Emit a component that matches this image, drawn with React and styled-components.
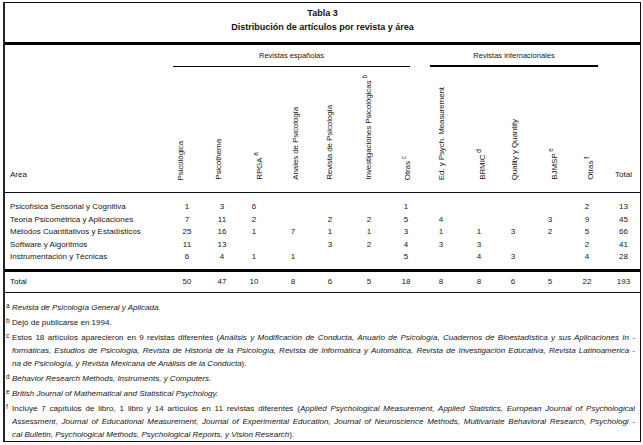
import React from 'react';
import styled, { createGlobalStyle } from 'styled-components';

const GlobalStyle = createGlobalStyle`
  html, body { margin: 0; padding: 0; background: #fff; }
  body {
    font-family: "Liberation Sans", Arial, sans-serif;
    color: #161616;
  }
`;

const COLS = '164px 36px 34px 30px 48px 26px 52px 22px 48px 28px 40px 34px 40px 33px';

const heads = [
  { label: 'Psicológica', dx: -7 },
  { label: 'Psicothema', dx: -4 },
  { label: 'RPGA', sup: 'a', dx: 3 },
  { label: 'Anales de Psicología', dx: 2 },
  { label: 'Revista de Psicología', dx: -1 },
  { label: 'Investigaciones Psicológicas', sup: 'b', dx: -3 },
  { label: 'Otras', sup: 'c', dx: -1 },
  { label: 'Ed. y Psych. Measurement', dx: 0 },
  { label: 'BRMIC', sup: 'd', dx: 1 },
  { label: 'Quality y Quantity', dx: 1 },
  { label: 'BJMSP', sup: 'e', dx: 2 },
  { label: 'Otras', sup: 'f', dx: 1 },
];

const rows = [
  ['Psicofísica Sensorial y Cognitiva', 1, 3, 6, '', '', '', 1, '', '', '', '', 2, 13],
  ['Teoría Psicométrica y Aplicaciones', 7, 11, 2, '', 2, 2, 5, 4, '', '', 3, 9, 45],
  ['Métodos Cuantitativos y Estadísticos', 25, 16, 1, 7, 1, 1, 3, 1, 1, 3, 2, 5, 66],
  ['Software y Algoritmos', 11, 13, '', '', 3, 2, 4, 3, 3, '', '', 2, 41],
  ['Instrumentación y Técnicas', 6, 4, 1, 1, '', '', 5, '', 4, 3, '', 4, 28],
];

const totals = ['Total', 50, 47, 10, 8, 6, 5, 18, 8, 8, 6, 5, 22, 193];

function App() {
  return (
    <>
      <GlobalStyle />
      <Frame>
        <TitleBlock>
          <Title>Tabla 3</Title>
          <Title>Distribución de artículos por revista y área</Title>
        </TitleBlock>

        <HeadGrid>
          <GroupTitle $from={2} $to={9} $mx="0 7px 0 4px" $rule={1}>Revistas españolas</GroupTitle>
          <GroupTitle $from={9} $to={14} $mx="0 9px 0 13px" $rule={2}>Revistas internacionales</GroupTitle>
          <AreaLabel>Area</AreaLabel>
          {heads.map((h, i) => (
            <RotHead key={i} $col={i + 2} $dx={h.dx}>
              {h.label}
              {h.sup && <RotSup>{h.sup}</RotSup>}
            </RotHead>
          ))}
          <TotalLabel>Total</TotalLabel>
        </HeadGrid>

        <Body>
          {rows.map((r, i) => (
            <Row key={i}>
              {r.map((c, j) => (j === 0 ? <AreaCell key={j}>{c}</AreaCell> : <Num key={j}>{c}</Num>))}
            </Row>
          ))}
        </Body>

        <TotalRow>
          {totals.map((c, j) => (j === 0 ? <AreaCell key={j}>{c}</AreaCell> : <Num key={j}>{c}</Num>))}
        </TotalRow>

        <Notes>
          <Note>
            <Mark>a</Mark>
            <NoteText><Line><i>Revista de Psicología General y Aplicada.</i></Line></NoteText>
          </Note>
          <Note>
            <Mark>b</Mark>
            <NoteText><Line>Dejó de publicarse en 1994.</Line></NoteText>
          </Note>
          <Note>
            <Mark>c</Mark>
            <NoteText>
              <Line $justify>
                Estos 18 artículos aparecieron en 9 revistas diferentes (<i>Análisis y Modificación de Conducta, Anuario de Psicología, Cuadernos de Bioestadística y sus Aplicaciones In -</i>
              </Line>
              <Line $justify>
                <i>formáticas, Estudios de Psicología, Revista de Historia de la Psicología, Revista de Informática y Automática, Revista de Investigación Educativa, Revista Latinoamerica -</i>
              </Line>
              <Line>
                <i>na de Psicología, y Revista Mexicana de Análisis de la Conducta</i>).
              </Line>
            </NoteText>
          </Note>
          <Note>
            <Mark>d</Mark>
            <NoteText><Line><i>Behavior Research Methods, Instruments, y Computers.</i></Line></NoteText>
          </Note>
          <Note>
            <Mark>e</Mark>
            <NoteText><Line><i>British Journal of Mathematical and Statistical Psychology.</i></Line></NoteText>
          </Note>
          <Note>
            <Mark>f</Mark>
            <NoteText>
              <Line $justify>
                Incluye 7 capítulos de libro, 1 libro y 14 artículos en 11 revistas diferentes (<i>Applied Psychological Measurement, Applied Statistics, European Journal of Psychological</i>
              </Line>
              <Line $justify>
                <i>Assessment, Journal of Educational Measurement, Journal of Experimental Education, Journal of Neuroscience Methods, Multivariate Behavioral Research, Psychologi -</i>
              </Line>
              <Line>
                <i>cal Bulletin, Psychological Methods, Psychological Reports, y Vision Research</i>).
              </Line>
            </NoteText>
          </Note>
        </Notes>
      </Frame>
    </>
  );
}

export default App;

const Frame = styled.div`
  box-sizing: border-box;
  width: 638px;
  height: 440px;
  margin: 2px 0 0 3px;
  border: 1px solid #111;
  border-left: 2px solid #222;
  font-size: 8px;
  overflow: hidden;
`;

const TitleBlock = styled.div`
  padding: 3px 0 8px;
  border-bottom: 3px solid #000;
  text-align: center;
`;

const Title = styled.div`
  font-weight: bold;
  font-size: 9px;
  line-height: 14px;
  color: #111;
`;

const HeadGrid = styled.div`
  display: grid;
  grid-template-columns: ${COLS};
  grid-template-rows: 22px 125px;
  border-bottom: 1px solid #111;
`;

const GroupTitle = styled.div`
  grid-row: 1;
  grid-column: ${p => p.$from} / ${p => p.$to};
  margin: ${p => p.$mx};
  padding-top: 6px;
  line-height: 10px;
  text-align: center;
  border-bottom: ${p => p.$rule}px solid #000;
  align-self: start;
  height: ${p => 16 - p.$rule}px;
  font-size: 7.5px;
`;

const AreaLabel = styled.div`
  grid-row: 2;
  grid-column: 1;
  align-self: end;
  padding: 0 0 12px 5px;
  line-height: 10px;
`;

const TotalLabel = styled.div`
  grid-row: 2;
  grid-column: 14;
  align-self: end;
  justify-self: center;
  padding-bottom: 12px;
  line-height: 10px;
`;

const RotHead = styled.div`
  grid-row: 2;
  grid-column: ${p => p.$col};
  align-self: end;
  justify-self: center;
  margin-bottom: 12px;
  margin-left: ${p => (p.$dx > 0 ? p.$dx * 2 : 0)}px;
  margin-right: ${p => (p.$dx < 0 ? -p.$dx * 2 : 0)}px;
  writing-mode: vertical-rl;
  transform: rotate(180deg);
  white-space: nowrap;
  font-size: 8px;
  line-height: 9px;
  letter-spacing: -0.1px;
`;

const RotSup = styled.span`
  font-size: 6.5px;
  margin-top: 2px;
  vertical-align: super;
`;

const Body = styled.div`
  padding: 8px 0 5.5px;
  border-bottom: 3px solid #000;
`;

const Row = styled.div`
  display: grid;
  grid-template-columns: ${COLS};
  line-height: 12.5px;
`;

const TotalRow = styled(Row)`
  line-height: 20px;
  border-bottom: 1px solid #111;
`;

const AreaCell = styled.div`
  padding-left: 5px;
  white-space: nowrap;
`;

const Num = styled.div`
  text-align: center;
`;

const Notes = styled.div`
  padding: 8px 5px 0 0;
  display: flex;
  flex-direction: column;
  gap: 2px;
`;

const Note = styled.div`
  display: flex;
  font-size: 8px;
`;

const Mark = styled.span`
  width: 6px;
  flex: none;
  font-size: 6.5px;
  line-height: 9px;
  padding-left: 1px;
`;

const NoteText = styled.div`
  flex: 1;
  min-width: 0;
`;

const Line = styled.div`
  line-height: 13px;
  white-space: ${p => (p.$justify ? 'normal' : 'nowrap')};
  text-align: ${p => (p.$justify ? 'justify' : 'left')};
  text-align-last: ${p => (p.$justify ? 'justify' : 'left')};
  height: 13px;
  overflow: hidden;
`;
